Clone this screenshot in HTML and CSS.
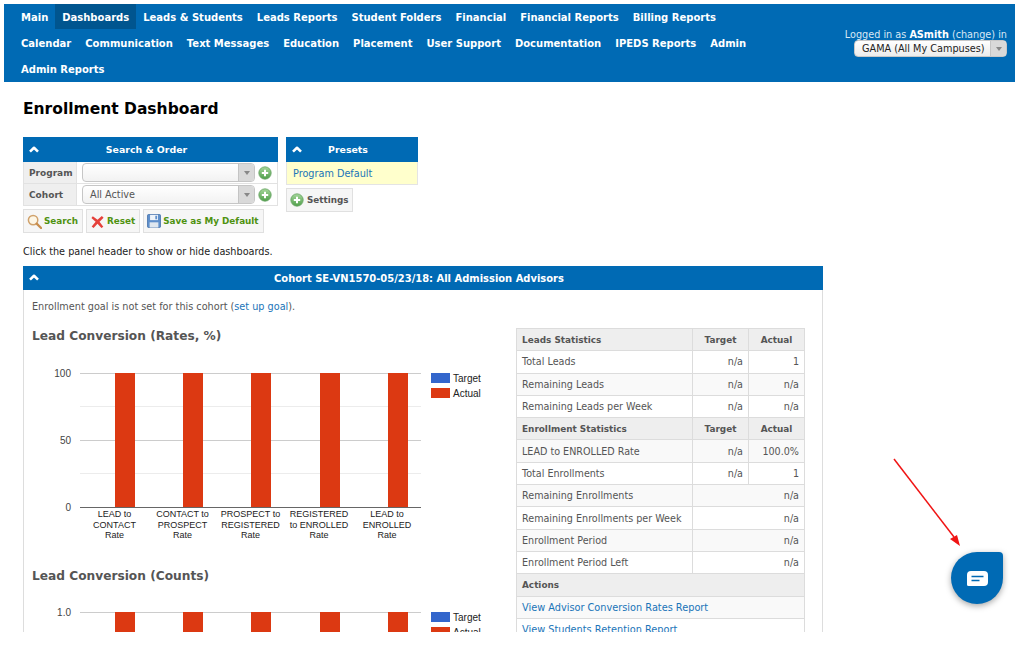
FILE: index.html
```html
<!DOCTYPE html>
<html lang="en">
<head>
<meta charset="utf-8">
<title>Enrollment Dashboard</title>
<link rel="stylesheet" href="styles.css">
</head>
<body>
<svg class="defs" width="0" height="0" aria-hidden="true">
  <defs>
    <linearGradient id="greenball" x1="0" y1="0" x2="0" y2="1"><stop offset="0" stop-color="#a5d69a"/><stop offset="1" stop-color="#4f9f4a"/></linearGradient>
    <symbol id="chev" viewBox="0 0 10 7"><path d="M1 5.600 5 1.800l4 3.800" fill="none" stroke="#fff" stroke-width="2.600" stroke-linejoin="round"/></symbol>
    <symbol id="plus" viewBox="0 0 14 14"><circle cx="7" cy="7" r="6.200" fill="url(#greenball)" stroke="#6aa566" stroke-width=".8"/><path d="M7 3.800v6.400M3.800 7h6.400" stroke="#fff" stroke-width="2"/></symbol>
  </defs>
</svg>
<div class="app">
  <header class="topbar">
    <nav class="menu">
      <a class="menu-item">Main</a>
      <a class="menu-item active">Dashboards</a>
      <a class="menu-item">Leads &amp; Students</a>
      <a class="menu-item">Leads Reports</a>
      <a class="menu-item">Student Folders</a>
      <a class="menu-item">Financial</a>
      <a class="menu-item">Financial Reports</a>
      <a class="menu-item">Billing Reports</a>
      <a class="menu-item">Calendar</a>
      <a class="menu-item">Communication</a>
      <a class="menu-item">Text Messages</a>
      <a class="menu-item">Education</a>
      <a class="menu-item">Placement</a>
      <a class="menu-item">User Support</a>
      <a class="menu-item">Documentation</a>
      <a class="menu-item">IPEDS Reports</a>
      <a class="menu-item">Admin</a>
      <a class="menu-item">Admin Reports</a>
    </nav>
    <div class="login">
      <div class="login-text">Logged in as <b>ASmith</b> (change) in</div>
      <div class="campus"><span class="campus-value">GAMA (All My Campuses)</span><span class="combo-arrow"><i></i></span></div>
    </div>
  </header>

  <main class="content">
    <h1 class="page-title">Enrollment Dashboard</h1>

    <div class="filters">
      <section class="search-panel">
        <div class="bar"><svg class="chev"><use href="#chev"/></svg><span class="bar-title">Search &amp; Order</span></div>
        <div class="field">
          <div class="field-label">Program</div>
          <div class="field-input"><div class="combo"><span class="combo-value"></span><span class="combo-arrow"><i></i></span></div><svg class="plus"><use href="#plus"/></svg></div>
        </div>
        <div class="field">
          <div class="field-label">Cohort</div>
          <div class="field-input"><div class="combo"><span class="combo-value">All Active</span><span class="combo-arrow"><i></i></span></div><svg class="plus"><use href="#plus"/></svg></div>
        </div>
        <div class="buttons">
          <button class="btn">
            <svg class="btn-icon" viewBox="0 0 16 16"><circle cx="6.500" cy="6.500" r="5" fill="#fdf6e6" stroke="#d0a26c" stroke-width="1.600"/><path d="M10.300 10.300 15 15" stroke="#c88d4c" stroke-width="2.400" stroke-linecap="round"/></svg>
            Search
          </button>
          <button class="btn">
            <svg class="btn-icon" viewBox="0 0 16 16"><path d="M3 2.500 8 6l4.600-3.800L14.500 4 10.200 8.200l4 5.300-2 1.500L8 10.500 3.800 15 1.800 13.200 6 8.300 1.500 4.200Z" fill="#e5403a"/></svg>
            Reset
          </button>
          <button class="btn">
            <svg class="btn-icon save" viewBox="0 0 16 16"><rect x=".5" y=".5" width="15" height="15" rx="1.500" fill="#5f8fcb" stroke="#4a76ad"/><rect x="3.500" y="1" width="9" height="6" fill="#eef3f9"/><rect x="3" y="9.500" width="10" height="6" fill="#dfe7ef"/><path d="M9.500 2h2v4h-2z" fill="#5f8fcb"/></svg>
            Save as My Default
          </button>
        </div>
      </section>
      <section class="presets-panel">
        <div class="bar"><svg class="chev"><use href="#chev"/></svg><span class="bar-title">Presets</span></div>
        <div class="preset-row"><a class="link">Program Default</a></div>
        <button class="btn settings"><svg class="plus"><use href="#plus"/></svg>Settings</button>
      </section>
    </div>

    <p class="hint">Click the panel header to show or hide dashboards.</p>

    <section class="cohort">
      <div class="bar cohort-bar"><svg class="chev"><use href="#chev"/></svg><span class="bar-title">Cohort SE-VN1570-05/23/18: All Admission Advisors</span></div>
      <div class="cohort-body">
        <p class="goal">Enrollment goal is not set for this cohort (<a class="link">set up goal</a>).</p>
        <div class="columns">
          <div class="charts">
            <h2 class="chart-title">Lead Conversion (Rates, %)</h2>
            <svg class="chart" width="484" height="205" viewBox="32 345 484 205">
              <g class="grid-minor"><path d="M80 406.500h341M80 473.500h341"/></g>
              <g class="grid"><path d="M80 373.500h341M80 440.500h341"/></g>
              <g class="bars">
                <rect x="115" y="373" width="20" height="134"/>
                <rect x="183" y="373" width="20" height="134"/>
                <rect x="251" y="373" width="20" height="134"/>
                <rect x="320" y="373" width="20" height="134"/>
                <rect x="388" y="373" width="20" height="134"/>
              </g>
              <path class="axis" d="M80 507.500h341"/>
              <g class="ytick">
                <text x="71" y="376.500">100</text>
                <text x="71" y="443.500">50</text>
                <text x="71" y="510.500">0</text>
              </g>
              <rect class="key-blue" x="431" y="373" width="19" height="10"/>
              <text class="key" x="453" y="381.500">Target</text>
              <rect class="key-red" x="431" y="388" width="19" height="10"/>
              <text class="key" x="453" y="396.500">Actual</text>
              <g class="xtick">
                <text x="114.500" y="516.500">LEAD to</text><text x="114.500" y="527.500">CONTACT</text><text x="114.500" y="538">Rate</text>
                <text x="182.500" y="516.500">CONTACT to</text><text x="182.500" y="527.500">PROSPECT</text><text x="182.500" y="538">Rate</text>
                <text x="250.500" y="516.500">PROSPECT to</text><text x="250.500" y="527.500">REGISTERED</text><text x="250.500" y="538">Rate</text>
                <text x="319" y="516.500">REGISTERED</text><text x="319" y="527.500">to ENROLLED</text><text x="319" y="538">Rate</text>
                <text x="387" y="516.500">LEAD to</text><text x="387" y="527.500">ENROLLED</text><text x="387" y="538">Rate</text>
              </g>
            </svg>
            <h2 class="chart-title second">Lead Conversion (Counts)</h2>
            <svg class="chart" width="484" height="205" viewBox="32 584 484 205">
              <path class="grid-line" d="M80 612.500h341"/>
              <g class="bars">
                <rect x="115" y="612" width="20" height="134"/>
                <rect x="183" y="612" width="20" height="134"/>
                <rect x="251" y="612" width="20" height="134"/>
                <rect x="320" y="612" width="20" height="134"/>
                <rect x="388" y="612" width="20" height="134"/>
              </g>
              <text class="ytick-one" x="71" y="615.500">1.0</text>
              <rect class="key-blue" x="431" y="612" width="19" height="10"/>
              <text class="key" x="453" y="620.500">Target</text>
              <rect class="key-red" x="431" y="627" width="19" height="10"/>
              <text class="key" x="453" y="635.500">Actual</text>
            </svg>
          </div>
          <table class="stats">
            <colgroup><col class="c1"><col class="c2"><col class="c3"></colgroup>
            <tr class="head"><th class="left">Leads Statistics</th><th>Target</th><th>Actual</th></tr>
            <tr><td>Total Leads</td><td class="num">n/a</td><td class="num">1</td></tr>
            <tr class="alt"><td>Remaining Leads</td><td class="num">n/a</td><td class="num">n/a</td></tr>
            <tr><td>Remaining Leads per Week</td><td class="num">n/a</td><td class="num">n/a</td></tr>
            <tr class="head"><th class="left">Enrollment Statistics</th><th>Target</th><th>Actual</th></tr>
            <tr class="alt"><td>LEAD to ENROLLED Rate</td><td class="num">n/a</td><td class="num">100.0%</td></tr>
            <tr><td>Total Enrollments</td><td class="num">n/a</td><td class="num">1</td></tr>
            <tr class="alt"><td>Remaining Enrollments</td><td class="num" colspan="2">n/a</td></tr>
            <tr><td>Remaining Enrollments per Week</td><td class="num" colspan="2">n/a</td></tr>
            <tr class="alt"><td>Enrollment Period</td><td class="num" colspan="2">n/a</td></tr>
            <tr><td>Enrollment Period Left</td><td class="num" colspan="2">n/a</td></tr>
            <tr class="head"><th class="left" colspan="3">Actions</th></tr>
            <tr class="alt"><td colspan="3"><a class="link report">View Advisor Conversion Rates Report</a></td></tr>
            <tr><td colspan="3"><a class="link report">View Students Retention Report</a></td></tr>
          </table>
        </div>
      </div>
    </section>
  </main>

  <svg class="arrow" width="70" height="92" viewBox="0 0 70 92"><path d="M1 1 61 79" stroke="#f01414" stroke-width="1.500"/><path d="M67 88 57 81l7-4Z" fill="#f01414"/></svg>
  <button class="chat" aria-label="Chat">
    <svg width="21" height="15" viewBox="0 0 21 15"><path d="M4 0h13a4 4 0 0 1 4 4v7a4 4 0 0 1-4 4H1.500A1.500 1.500 0 0 1 0 13.500V4a4 4 0 0 1 4-4Z" fill="#fff"/><path d="M4.500 5.500h12M4.500 9.500h8" stroke="#006ab4" stroke-width="1.600"/></svg>
  </button>
</div>
</body>
</html>
```

FILE: styles.css
```css
* { box-sizing: border-box; }
html, body { margin: 0; padding: 0; background: #fff; }
body { font-family: "DejaVu Sans", Verdana, sans-serif; font-size: 9.7px; color: #222; }
.defs { position: absolute; }
.app { position: relative; margin: 4px; width: 1011px; height: 628px; overflow: hidden; }

.topbar { display: flex; height: 78px; padding: 0 8px 0 10px; background: #006ab4; }
.menu { display: flex; flex-wrap: wrap; align-content: flex-start; width: 750px; }
.menu-item { height: 26px; line-height: 27px; padding: 0 7px; color: #fff; font-weight: 700; font-size: 10px; white-space: nowrap; }
.menu-item.active { background: #00558f; height: 25px; }
.login { display: flex; flex-direction: column; align-items: flex-end; margin-left: auto; padding-top: 24px; color: #d9e8f4; white-space: nowrap; }
.login-text { line-height: 13px; margin-bottom: -1px; }
.login b { color: #fff; }
.campus { display: flex; width: 153px; height: 17px; border: 1px solid #c8c8c8; border-radius: 4px; background: linear-gradient(#fff, #ececec); color: #222; overflow: hidden; }
.campus-value { flex: 1; line-height: 15px; padding-left: 7px; }
.combo-arrow { display: flex; width: 16px; align-items: center; justify-content: center; background: #d9d9d9; border-left: 1px solid #c4c4c4; }
.combo-arrow i { width: 0; height: 0; border: 3px solid transparent; border-top: 4px solid #888; border-bottom: 0; }

.content { padding: 0 19px; }
.page-title { margin: 0; padding-top: 15px; height: 55px; line-height: 24px; font-size: 15.500px; font-weight: 700; color: #000; }

.filters { display: flex; gap: 8px; height: 107px; }
.search-panel { width: 255px; }
.presets-panel { width: 132px; }
.bar { position: relative; display: flex; align-items: center; justify-content: center; height: 25px; padding: 0 8px 1px 0; background: #006ab4; color: #fff; font-weight: 700; font-size: 9.400px; }
.chev { position: absolute; left: 6px; top: 9px; width: 10px; height: 7px; }
.field { display: flex; height: 22px; border: 1px solid #e2e2e2; border-top: 0; }
.field-label { display: flex; align-items: center; width: 53px; padding-left: 5px; background: #efefef; border-right: 1px solid #e2e2e2; color: #555; font-weight: 700; font-size: 9px; }
.field-input { display: flex; flex: 1; align-items: center; padding-left: 5px; gap: 3px; }
.combo { display: flex; width: 173px; height: 19px; border: 1px solid #c6c6c6; border-radius: 4px; background: linear-gradient(#fff, #f2f2f2); overflow: hidden; }
.combo-value { flex: 1; line-height: 17px; padding-left: 7px; color: #555; }
.plus { display: block; width: 14px; height: 14px; flex: none; }
.buttons { display: flex; gap: 3px; margin-top: 3px; }
.btn { display: flex; align-items: center; gap: 2px; height: 24px; padding: 0 4px 0 3px; border: 1px solid #e0e0e0; background: #f6f6f6; color: #4f9211; font: 700 8.800px "DejaVu Sans", Verdana, sans-serif; white-space: nowrap; }
.btn-icon { width: 15px; height: 15px; flex: none; }
.btn-icon.save { width: 14px; height: 14px; }
.preset-row { display: flex; align-items: center; height: 23px; padding-left: 6px; background: #ffffcc; border: 1px solid #e4e4e4; border-top: 0; }
.link { color: #1a74b8; text-decoration: none; }
.settings { margin-top: 3px; width: 67px; padding: 0 0 0 3px; gap: 3px; color: #555; }

.hint { margin: 0; height: 22px; padding-top: 1px; line-height: 14px; color: #222; }

.cohort { width: 800px; border: 1px solid #ddd; border-top: 0; height: 400px; }
.cohort-bar { margin: 0 -1px; height: 24px; padding-bottom: 0; font-size: 9.950px; }
.cohort-bar .chev { left: 6px; top: 8px; }
.cohort-body { padding: 0 8px; color: #555; }
.goal { margin: 0; height: 35px; padding-top: 10px; line-height: 14px; }
.columns { display: flex; }
.charts { width: 484px; }
.chart-title { margin: 0; height: 20px; padding-top: 2px; line-height: 18px; font-size: 12.200px; font-weight: 700; color: #555; }
.chart-title.second { height: 21px; margin-top: 13px; padding-top: 4px; }
.chart { display: block; font-family: "Liberation Sans", Arial, sans-serif; font-size: 9px; }
.grid path, .grid-line { stroke: #ccc; stroke-width: 1; fill: none; }
.grid-minor path { stroke: #ececec; stroke-width: 1; fill: none; }
.bars rect { fill: #dc3912; }
.axis { stroke: #666; stroke-width: 1; fill: none; }
.ytick text, .ytick-one { text-anchor: end; fill: #444; font-size: 10px; }
.xtick text { text-anchor: middle; fill: #222; font-size: 9px; }
.key { fill: #222; font-size: 10px; }
.key-blue { fill: #3366cc; }
.key-red { fill: #dc3912; }

.stats { width: 289px; height: 312px; margin-top: 3px; border-collapse: collapse; table-layout: fixed; color: #555; font-size: 9.600px; flex: none; }
.c1 { width: 176px; }
.c2 { width: 56px; }
.stats tr { height: 22.300px; }
.stats th, .stats td { border: 1px solid #dcdcdc; padding: 0 5px; white-space: nowrap; }
.stats th { background: #eeeeee; color: #555; font-weight: 700; font-size: 8.900px; text-align: center; }
.stats th.left { text-align: left; }
.stats .alt td { background: #f9f9f9; }
.stats .num { text-align: right; }
.report { font-size: 9.750px; }

.arrow { position: absolute; left: 889px; top: 454px; }
.chat { position: absolute; left: 947px; top: 548px; display: flex; align-items: center; justify-content: center; width: 52px; height: 52px; padding: 0; border: 0; border-radius: 50% 4px 50% 50%; background: #006ab4; box-shadow: 0 2px 6px rgba(0, 0, 0, .35); }
```
